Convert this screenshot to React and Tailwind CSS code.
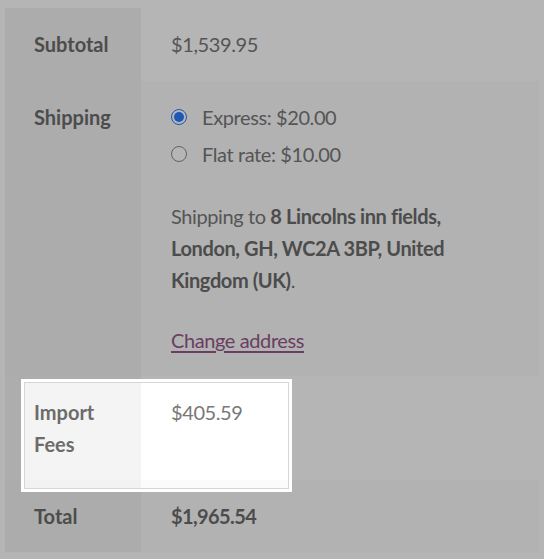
import React from 'react'

function Radio({ checked }) {
  return checked ? (
    <span className="w-[16px] h-[16px] rounded-full border-[1.5px] border-[#2a7dff] bg-white flex items-center justify-center shrink-0">
      <span className="w-[10px] h-[10px] rounded-full bg-[#2a7dff]" />
    </span>
  ) : (
    <span className="w-[16px] h-[16px] rounded-full border-[1.5px] border-[#8a8a8a] bg-white shrink-0" />
  )
}

export default function App() {
  return (
    <div
      className="relative w-[544px] h-[559px] overflow-hidden bg-white text-[20px] leading-[32px] text-[#787878]"
      style={{ fontFamily: 'Lato, "Open Sans", sans-serif' }}
    >
      <div className="pt-[8px] px-[5px]">
        <table className="w-full border-collapse">
          <tbody>
            <tr>
              <th className="w-[136px] bg-[#f2f2f2] pl-[29px] pr-2 pt-[20px] pb-[21px] text-left align-top font-bold text-[#6c6c6c]">
                Subtotal
              </th>
              <td className="pl-[30px] pt-[20px] pb-[21px] align-top tracking-[-0.4px]">$1,539.95</td>
            </tr>
            <tr>
              <th className="bg-[#f2f2f2] pl-[29px] pr-2 py-[20px] text-left align-top font-bold text-[#6c6c6c]">
                Shipping
              </th>
              <td className="bg-[#fbfbfb] pl-[30px] py-[20px] align-top tracking-[-0.4px]">
                <ul className="flex flex-col gap-[5px]">
                  <li className="flex items-center gap-[15px]">
                    <Radio checked />
                    <span>Express: $20.00</span>
                  </li>
                  <li className="flex items-center gap-[15px]">
                    <Radio />
                    <span>Flat rate: $10.00</span>
                  </li>
                </ul>
                <p className="mt-[30px]">
                  Shipping to <strong className="font-bold text-[#6c6c6c]">8 Lincolns inn fields,</strong>
                  <br />
                  <strong className="font-bold text-[#6c6c6c]">London, GH, WC2A 3BP, United</strong>
                  <br />
                  <strong className="font-bold text-[#6c6c6c]">Kingdom (UK)</strong>.
                </p>
                <p className="mt-[28px]">
                  <a href="#" className="text-[#96588a] underline underline-offset-[3px]">
                    Change address
                  </a>
                </p>
              </td>
            </tr>
            <tr>
              <th className="bg-[#f4f4f4] pl-[29px] pr-2 py-[20px] text-left align-top font-bold text-[#6c6c6c]">
                Import Fees
              </th>
              <td className="pl-[30px] py-[20px] align-top tracking-[-0.4px]">$405.59</td>
            </tr>
            <tr>
              <th className="bg-[#f2f2f2] pl-[29px] pr-2 py-[20px] text-left align-top font-bold text-[#6c6c6c]">
                Total
              </th>
              <td className="bg-[#fbfbfb] pl-[30px] py-[20px] align-top font-bold text-[#6c6c6c] tracking-[-0.6px]">
                $1,965.54
              </td>
            </tr>
          </tbody>
        </table>
      </div>

      {/* tour spotlight around the import fees row */}
      <div className="absolute left-[21px] top-[379px] w-[271px] h-[113px] border-[3px] border-white shadow-[inset_0_0_0_1px_#d6d6d6,0_0_0_9999px_rgba(0,0,0,0.29)] pointer-events-none" />
    </div>
  )
}
